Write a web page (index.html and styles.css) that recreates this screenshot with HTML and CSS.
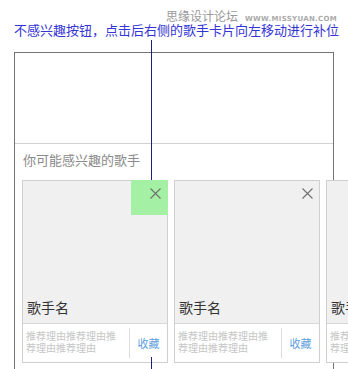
FILE: index.html
```html
<!DOCTYPE html>
<html lang="zh-CN">
<head>
    <meta charset="UTF-8">
    <title>不感兴趣按钮</title>
    <link rel="stylesheet" href="styles.css">
</head>
<body>

    <div class="watermark">
        <span class="wm-cn">思缘设计论坛</span><span class="wm-en">WWW.MISSYUAN.COM</span>
    </div>
    <div class="caption">不感兴趣按钮，点击后右侧的歌手卡片向左移动进行补位</div>

    <div class="frame">
        <div class="intro"></div>
        <div class="section-title">你可能感兴趣的歌手</div>

        <div class="cards">
            <div class="card">
                <div class="mark"></div>
                <span class="close"><svg width="11" height="11" viewBox="0 0 11 11"><path d="M0.5 0.5L10.5 10.5M10.5 0.5L0.5 10.5" stroke="#707070" stroke-width="1.1" fill="none"/></svg></span>
                <div class="card-name">歌手名</div>
                <div class="card-foot">
                    <div class="reason">推荐理由推荐理由推荐理由推荐理由</div>
                    <div class="fav">收藏</div>
                </div>
            </div>
            <div class="card">
                <span class="close"><svg width="11" height="11" viewBox="0 0 11 11"><path d="M0.5 0.5L10.5 10.5M10.5 0.5L0.5 10.5" stroke="#707070" stroke-width="1.1" fill="none"/></svg></span>
                <div class="card-name">歌手名</div>
                <div class="card-foot">
                    <div class="reason">推荐理由推荐理由推荐理由推荐理由</div>
                    <div class="fav">收藏</div>
                </div>
            </div>
            <div class="card">
                <span class="close"><svg width="11" height="11" viewBox="0 0 11 11"><path d="M0.5 0.5L10.5 10.5M10.5 0.5L0.5 10.5" stroke="#707070" stroke-width="1.1" fill="none"/></svg></span>
                <div class="card-name">歌手名</div>
                <div class="card-foot">
                    <div class="reason">推荐理由推荐理由推荐理由推荐理由</div>
                    <div class="fav">收藏</div>
                </div>
            </div>
        </div>
    </div>

    <!-- annotation lines -->
    <div class="note-line note-top"></div>
    <div class="note-line note-bottom"></div>

</body>
</html>
```

FILE: styles.css
```css
html, body { margin: 0; overflow: hidden; }
body { position: relative; width: 348px; height: 369px; background: #fff; font-family: "Noto Sans CJK SC", "DejaVu Sans", sans-serif; }

.watermark { height: 14px; line-height: 14px; padding: 7px 11px 0 0; margin-bottom: 1px; text-align: right; white-space: nowrap; }
.wm-cn { font-size: 12px; color: #999; }
.wm-en { font-family: "DejaVu Sans", sans-serif; font-weight: bold; font-size: 7px; color: #aaa; margin-left: 7px; letter-spacing: 0.3px; }

.caption { font-size: 13px; line-height: 16px; color: #3434d6; padding-left: 14px; white-space: nowrap; }

.frame { margin: 14px 14px 0; border: 1px solid #747474; border-bottom: none; padding-bottom: 20px; }
.intro { height: 90px; border-bottom: 1px solid #d2d2d2; }
.section-title { padding: 6px 0 0 8px; line-height: 20px; font-size: 13px; color: #8a8a8a; }

.cards { display: flex; gap: 6px; padding-left: 7px; margin-top: 10px; }
.card { position: relative; flex: none; width: 144px; border: 1px solid #cfcfcf; background: #fff; }
.card-name { box-sizing: border-box; height: 143px; background: #f0f0f0; border-bottom: 1px solid #d8d8d8; display: flex; align-items: flex-end; padding: 0 0 6px 4px; font-size: 14px; line-height: 20px; color: #333; }
.card-foot { display: flex; height: 38px; }
.reason { box-sizing: border-box; width: 106px; padding: 6px 10px 0 3px; font-size: 10px; line-height: 12px; color: #c6c6c6; }
.fav { flex: 1; margin: 4px 0; border-left: 1px solid #dcdcdc; display: flex; align-items: center; justify-content: center; font-size: 11px; color: #5b9de0; }

.close { position: absolute; top: 0; right: 0; width: 24px; height: 24px; display: flex; align-items: center; justify-content: center; z-index: 2; }
.mark { position: absolute; top: -1px; right: -1px; width: 37px; height: 35px; background: #a4f0a4; z-index: 1; }

.note-line { position: absolute; left: 151px; width: 1px; background: #1e1e86; z-index: 5; }
.note-top { top: 40px; height: 140px; }
.note-bottom { top: 357px; height: 12px; }
```
